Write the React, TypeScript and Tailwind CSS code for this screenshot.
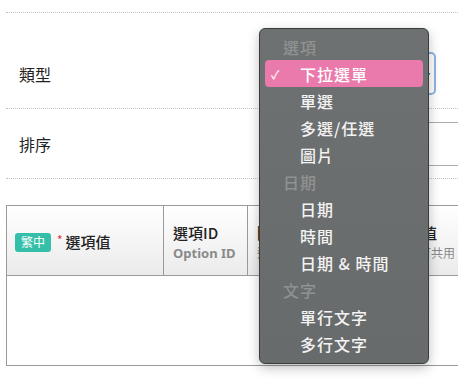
import React from 'react';

type MenuRow = { label: string; header?: boolean; selected?: boolean };

const menuRows: MenuRow[] = [
    { label: '選項', header: true },
    { label: '下拉選單', selected: true },
    { label: '單選' },
    { label: '多選/任選' },
    { label: '圖片' },
    { label: '日期', header: true },
    { label: '日期' },
    { label: '時間' },
    { label: '日期 & 時間' },
    { label: '文字', header: true },
    { label: '單行文字' },
    { label: '多行文字' },
];

const TypeMenu: React.FC = () => {
    return (
        <div className="absolute left-[259px] top-[28px] w-[170px] h-[336px] rounded-[6px] border border-[#3a3c3c] bg-gradient-to-b from-[#6e7171] to-[#686b6b] shadow-[0_4px_12px_rgba(0,0,0,0.25)] pt-[4px] px-[5px]">
            {menuRows.map((row, i) =>
                row.header ? (
                    <div key={i} className="h-[27px] flex items-center pl-[18px] text-[16px] font-medium tracking-[1px] text-[#8f9292]">
                        {row.label}
                    </div>
                ) : (
                    <div
                        key={i}
                        className={`h-[27px] flex items-center rounded-[4px] text-[16px] font-medium tracking-[1px] ${row.selected ? 'bg-[#ea7aab] text-white' : 'text-[#f3f3f3]'}`}
                    >
                        <span className="w-[35px] pl-[6px] text-[12px]">{row.selected ? '✓' : ''}</span>
                        <span>{row.label}</span>
                    </div>
                )
            )}
        </div>
    );
};

export default function App() {
    return (
        <div className="relative w-[458px] h-[382px] overflow-hidden bg-white text-[#222] font-['Noto_Sans_CJK_TC','Noto_Sans',sans-serif]">
            <div className="w-[620px] pl-[6px] pt-[12px]">
                <div className="border-t border-dotted border-[#c4c4c4]">
                    <div className="flex items-center pt-[39px] pb-[13px] border-b border-dotted border-[#c4c4c4]">
                        <div className="w-[264px] pl-[13px] text-[16px]">類型</div>
                        <div className="w-[166px] h-[43px] rounded-[5px] border-2 border-[#8db4e2] flex items-center justify-end pr-[4px] text-[10px] text-[#333]">
                            ▾
                        </div>
                    </div>
                    <div className="flex items-center pt-[13px] pb-[12px] border-b border-dotted border-[#c4c4c4]">
                        <div className="w-[264px] pl-[13px] text-[16px]">排序</div>
                        <div className="w-[300px] h-[44px] border border-[#aaaaaa]"></div>
                    </div>
                </div>

                <div className="mt-[26px] border border-[#9a9a9a]">
                    <div className="grid grid-cols-[157px_84px_150px_220px] h-[70px] border-b border-[#9a9a9a] bg-gradient-to-b from-white to-[#ebebeb]">
                        <div className="flex items-center pl-[8px] pt-[3px] border-r border-[#9a9a9a]">
                            <span className="h-[19px] w-[36px] rounded-[3px] bg-[#35bfa9] text-white text-[12px] flex items-center justify-center">繁中</span>
                            <span className="ml-[6px] -mt-[4px] text-[#e5322d] text-[12px]">*</span>
                            <span className="ml-[3px] text-[15px] font-medium">選項值</span>
                        </div>
                        <div className="flex flex-col justify-center pl-[9px] pt-[4px] border-r border-[#9a9a9a] leading-[20px]">
                            <span className="text-[15px] font-medium">選項ID</span>
                            <span className="text-[13px] font-bold text-[#8a8a8a] font-['Noto_Sans',sans-serif]">Option ID</span>
                        </div>
                        <div className="flex flex-col justify-center pl-[9px] pt-[4px] border-r border-[#9a9a9a] leading-[20px]">
                            <span className="text-[15px] font-medium">圖示</span>
                            <span className="text-[12px] text-[#8a8a8a]">選填</span>
                        </div>
                        <div className="flex flex-col justify-center pl-[9px] pt-[4px] leading-[20px]">
                            <span className="text-[15px] font-medium">數值</span>
                            <span className="text-[12px] text-[#8a8a8a]">不可共用</span>
                        </div>
                    </div>
                    <div className="h-[89px]"></div>
                </div>
            </div>
            <TypeMenu />
        </div>
    );
}
